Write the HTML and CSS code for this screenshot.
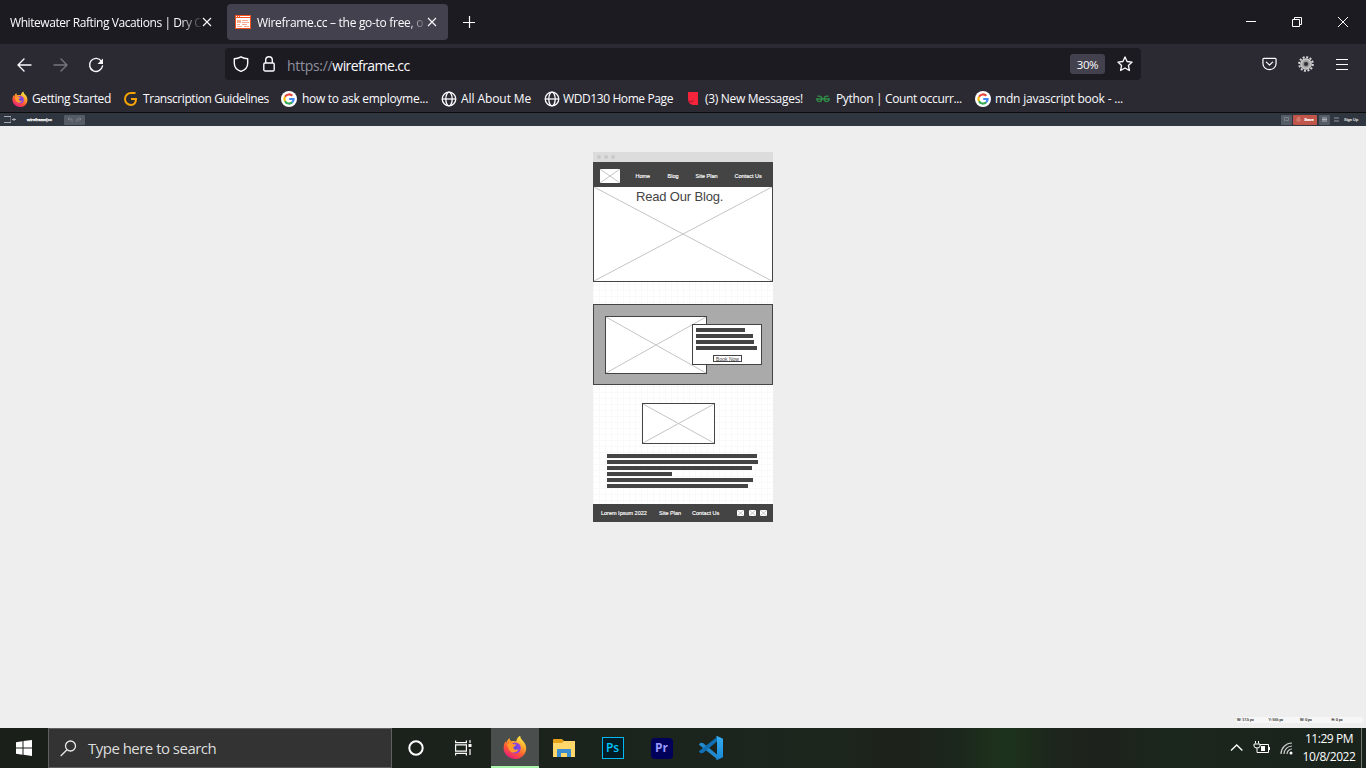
FILE: index.html
```
<!DOCTYPE html>
<html lang="en">
<head>
<meta charset="utf-8">
<title>Wireframe.cc</title>
<link rel="stylesheet" href="styles.css">
</head>
<body>
<svg class="defs" width="0" height="0" aria-hidden="true">
  <defs>
    <linearGradient id="flame" x1=".8" y1="0" x2=".25" y2="1"><stop offset="0" stop-color="#fff44f"/><stop offset=".35" stop-color="#ffa72b"/><stop offset=".65" stop-color="#ff5634"/><stop offset="1" stop-color="#e31587"/></linearGradient>
    <radialGradient id="globeFill"><stop offset="0" stop-color="#5b4be0"/><stop offset="1" stop-color="#9a3fe0"/></radialGradient>
    <radialGradient id="gearFill"><stop offset=".2" stop-color="#777"/><stop offset="1" stop-color="#d8d8d8"/></radialGradient>
    <linearGradient id="code" x1="0" y1="0" x2="0" y2="1"><stop offset="0" stop-color="#35aef2"/><stop offset="1" stop-color="#1a86d3"/></linearGradient>
  </defs>
  <symbol id="firefox" viewBox="0 0 24 24">
    <path fill="url(#flame)" d="M17.2 .8c.1 2.1 1 3.3 2.6 4.9 2.600 2.500 3.900 6 3.200 9.500C22 20.300 17.600 24 12.300 24 6 24 .6 19.200.6 12.800c0-2.600.8-5 2.100-6.800.1 1 .3 1.600.7 2.100C3.700 6 4.900 4.200 6.500 3c0 1.600.9 2.900 1.900 3.300 2-.4 3.700-.2 4.900.3.1-2.400 1.500-4.600 3.900-5.800z"/>
    <circle cx="12.200" cy="13" r="5.600" fill="url(#globeFill)"/>
    <path fill="#ff9a2b" d="M4 9.500c2.500-2 4.800-1.600 6.600-.2l2.600.1c-.2 1.600-2.700 1.800-2.900 3.100.1 2.200 2.700 3.100 5.300 1.500-1.300 3.200-4.800 4.700-7.800 2.700C5.600 15.300 5 12 4 9.500z"/>
  </symbol>
  <symbol id="google" viewBox="0 0 16 16">
    <circle cx="8" cy="8" r="8" fill="#fff"/>
    <g fill="none" stroke-width="2.200"><path stroke="#ea4335" d="M11.300 4.800A4.600 4.600 0 0 0 4 5.800"/><path stroke="#fbbc05" d="M4 5.700a4.600 4.600 0 0 0 0 4.600"/><path stroke="#34a853" d="M4 10.200a4.600 4.600 0 0 0 7.100 1.200"/><path stroke="#4285f4" d="M8.200 8h4.400a4.600 4.600 0 0 1-1.500 3.400"/></g>
  </symbol>
  <symbol id="globe" viewBox="0 0 16 16">
    <g fill="none" stroke="#fbfbfe" stroke-width="1.300"><circle cx="8" cy="8" r="6.800"/><ellipse cx="8" cy="8" rx="3.200" ry="6.800"/><path d="M1.500 8h13"/></g>
  </symbol>
  <symbol id="x" viewBox="0 0 10 10"><path d="M1 1l8 8M9 1l-8 8" stroke="#fbfbfe" stroke-width="1.100" fill="none"/></symbol>
  <symbol id="cross" viewBox="0 0 100 100" preserveAspectRatio="none"><path d="M0 0L100 100M100 0L0 100" stroke="#c4c4c4" fill="none" vector-effect="non-scaling-stroke"/></symbol>
</svg>

<header class="browser">
  <div class="tabs">
    <div class="tab"><span class="tab-title first">Whitewater Rafting Vacations | Dry C</span><svg class="close"><use href="#x"/></svg></div>
    <div class="tab active">
      <svg class="favicon" viewBox="0 0 16 14"><path fill="#fff" d="M0 0h16v14H0z"/><path fill="#f4511e" d="M0 0h16v3H0zM0 3h1v11H0zM15 3h1v11h-1zM1 13h14v1H1z"/><path fill="#fff" d="M1 1h1v1H1zM3 1h1v1H3zM5 1h10v1H5z"/><path fill="#ffab91" d="M2 5h4v3H2zM7 5h6v1H7zM7 7h7v1H7zM2 9h3v1H2zM7 9h5v1H7zM2 11h5v1H2zM9 11h5v1H9z"/></svg>
      <span class="tab-title second">Wireframe.cc – the go-to free, o</span><svg class="close"><use href="#x"/></svg>
    </div>
    <svg class="new-tab" viewBox="0 0 12 12"><path d="M6.500 0v12M0 6.500h12" stroke="#fbfbfe" stroke-width="1.200"/></svg>
    <svg class="window-controls" viewBox="0 0 104 12" fill="none" stroke="#fff"><path d="M0 5.500h10M46.500 3.500h7v7h-7zM48.500 3.500v-2h7v7h-2M92 1l10 10M102 1L92 11"/></svg>
  </div>
  <div class="navigation">
    <svg class="nav-icons" viewBox="0 0 90 16" fill="none" stroke="#fbfbfe" stroke-width="1.400" stroke-linecap="round" stroke-linejoin="round"><path d="M15 8H2M8 2L2 8l6 6"/><path stroke="#77767e" d="M38 8h13M45 2l6 6-6 6"/><path d="M85.500 4.300A6.500 6.500 0 1 0 86.500 9"/><path fill="#fbfbfe" stroke="none" d="M87 1.500v5.500h-5.500z"/></svg>
    <div class="url">
      <svg class="shield" viewBox="0 0 16 16" fill="none" stroke="#fbfbfe" stroke-width="1.400" stroke-linejoin="round"><path d="M8 .8c2.500 1.500 4.200 1.900 6.700 1.900v4.500c0 4-2.400 6.700-6.700 8.200C3.700 13.900 1.300 11.200 1.300 7.200V2.700C3.800 2.700 5.500 2.300 8 .8z"/></svg>
      <svg class="lock" viewBox="0 0 12 16" fill="none" stroke="#fbfbfe" stroke-width="1.400"><rect x=".8" y="7" width="10.400" height="8" rx="1.300"/><path d="M2.700 7V4a3.300 3.300 0 0 1 6.600 0v3"/></svg>
      <span class="address"><span class="scheme">https://</span>wireframe.cc</span>
      <span class="zoom">30%</span>
      <svg class="star" viewBox="0 0 16 16"><path fill="none" stroke="#fbfbfe" stroke-width="1.300" stroke-linejoin="round" d="M8 .9l2.100 4.600 5 .6-3.700 3.400 1 5L8 12l-4.400 2.500 1-5L.9 6.100l5-.6z"/></svg>
    </div>
    <svg class="pocket" viewBox="0 0 16 14" fill="none" stroke="#fbfbfe" stroke-width="1.300" stroke-linejoin="round" stroke-linecap="round"><path d="M2 1h12q1 0 1 1v4.500a7 6.500 0 0 1-14 0V2q0-1 1-1z"/><path d="M4.700 5L8 8.200 11.300 5"/></svg>
    <svg class="gear" viewBox="0 0 16 16"><circle cx="8" cy="8" r="6.800" fill="none" stroke="#d8d8d8" stroke-width="2" stroke-dasharray="2 1.560"/><circle cx="8" cy="8" r="5.800" fill="url(#gearFill)"/><circle cx="8" cy="8" r="2" fill="#303036"/></svg>
    <svg class="menu" viewBox="0 0 12 11"><path d="M0 .5h12M0 5.500h12M0 10.500h12" stroke="#fbfbfe" stroke-width="1"/></svg>
  </div>
  <nav class="bookmarks">
    <a class="bookmark started"><svg><use href="#firefox"/></svg><span>Getting Started</span></a>
    <a class="bookmark guidelines"><svg viewBox="0 0 16 16" fill="none" stroke="#f5a300" stroke-width="2"><path d="M12.500 2H8A5.800 5.800 0 0 0 8 14q4.800 0 5-6H8"/></svg><span>Transcription Guidelines</span></a>
    <a class="bookmark ask"><svg><use href="#google"/></svg><span>how to ask employme...</span></a>
    <a class="bookmark about"><svg><use href="#globe"/></svg><span>All About Me</span></a>
    <a class="bookmark wdd"><svg><use href="#globe"/></svg><span>WDD130 Home Page</span></a>
    <a class="bookmark messages"><svg viewBox="0 0 16 16"><path fill="#f3243b" d="M3 1h10v13H8Q3 13 3 8z"/><path fill="none" stroke="#9b1028" d="M4 10q3 2 4.500-.7"/></svg><span>(3) New Messages!</span></a>
    <a class="bookmark python"><svg viewBox="0 0 16 16" fill="none" stroke="#2f8d46" stroke-width="1.400"><path d="M2.500 5.200Q6.900 4.500 6.900 8 6.500 10.800 4 10.600 1.700 10 1.700 8H14.300Q14.300 10 12 10.600 9.500 10.800 9.100 8 9.100 4.500 13.500 5.200"/></svg><span>Python | Count occurr...</span></a>
    <a class="bookmark mdn"><svg><use href="#google"/></svg><span>mdn javascript book - ...</span></a>
  </nav>
</header>

<div class="app-bar">
  <svg class="app-menu" viewBox="0 0 12 7" fill="none" stroke="#a5a9af"><path d="M0 .5h7M0 6.500h7" /><path stroke="#5d646e" d="M6.500 1v5"/><path d="M8 3.500h4M10 2v3"/></svg>
  <b class="brand">wireframe|cc</b>
  <svg class="history" viewBox="0 0 21 10"><rect width="21" height="10" rx="1" fill="#555c66"/><path d="M4 4h4v3M5.500 2.500L4 4l1.500 1.500M17 4h-4v3M15.500 2.500L17 4l-1.500 1.500" fill="none" stroke="#858b94" stroke-width=".8"/></svg>
  <span class="app-button plain"><svg viewBox="0 0 5 5"><path d="M.5 4.500v-4h4v3h-3" fill="none" stroke="#8a9098" stroke-width=".7"/></svg></span>
  <span class="app-button save"><svg viewBox="0 0 5 5"><path d="M1 2h3v2H1zM1 1l3-.5" fill="none" stroke="#df9e95" stroke-width=".7"/></svg><b>Save</b></span>
  <span class="app-button list"><svg viewBox="0 0 5 5"><path d="M0 1h5M0 2.500h5M0 4h5" stroke="#b6bac0" stroke-width=".9"/></svg></span>
  <svg class="app-lines" viewBox="0 0 5 5"><path d="M0 1h5M0 4h5" stroke="#9ca1a8" stroke-width=".9"/></svg>
  <span class="sign-up">Sign Up</span>
</div>

<main class="workspace">
  <div class="mock">
    <div class="mock-chrome"><i></i><i></i><i></i></div>
    <div class="mock-header">
      <svg class="mock-logo"><use href="#cross"/></svg>
      <span class="home">Home</span><span class="blog">Blog</span><span class="plan">Site Plan</span><span class="contact">Contact Us</span>
    </div>
    <div class="hero"><svg><use href="#cross"/></svg><h1>Read Our Blog.</h1></div>
    <div class="feature">
      <div class="picture"><svg><use href="#cross"/></svg></div>
      <div class="card">
        <i style="width:49px"></i><i style="width:57px"></i><i style="width:58px"></i><i style="width:61px"></i>
        <span class="book">Book Now</span>
      </div>
    </div>
    <div class="thumbnail"><svg><use href="#cross"/></svg></div>
    <div class="copy"><i style="width:150px"></i><i style="width:151px"></i><i style="width:145px"></i><i style="width:65px"></i><i style="width:146px"></i><i style="width:141px"></i></div>
    <div class="mock-footer">
      <span class="legal">Lorem Ipsum 2022</span><span class="foot-plan">Site Plan</span><span class="foot-contact">Contact Us</span>
      <svg><use href="#cross"/></svg><svg><use href="#cross"/></svg><svg><use href="#cross"/></svg>
    </div>
  </div>
  <div class="status"><span>W: 17.5 px</span><span>Y: 555 px</span><span>W: 0 px</span><span>H: 0 px</span></div>
</main>

<footer class="taskbar">
  <svg class="windows" viewBox="0 0 16 16"><path fill="#fff" d="M0 2.200L6.500 1.300v6.200H0zM7.500 1.100L16 0v7.500H7.500zM0 8.500h6.500v6.200L0 13.800zM7.500 8.500H16V16l-8.500-1.200z"/></svg>
  <div class="search"><svg viewBox="0 0 17 17" fill="none" stroke="#e8e8e8" stroke-width="1.300"><circle cx="10.500" cy="6" r="5"/><path d="M7 9.700L.7 16"/></svg><span>Type here to search</span></div>
  <div class="task cortana"><svg width="16" height="16" viewBox="0 0 16 16"><circle cx="8" cy="8" r="6.700" fill="none" stroke="#fff" stroke-width="2"/></svg></div>
  <div class="task view"><svg width="17" height="16" viewBox="0 0 17 16" fill="none" stroke="#fff" stroke-width="1.200"><path d="M.6 .5v2.200h10.800V.5M.6 4.900h10.800v6.200H.6zM.6 15.500v-2.200h10.800v2.200M15 0v3M15 9v6"/><path d="M13.500 5.500h3" stroke-width="3"/></svg></div>
  <div class="task current"><svg width="24" height="24"><use href="#firefox"/></svg></div>
  <div class="task"><svg class="folder" width="22" height="19" viewBox="0 0 22 19"><path fill="#e3a21a" d="M0 1q0-1 1-1h8l2 2h11v4H0z"/><path fill="#ffd76a" d="M0 4h9l2-2h11v16H0z"/><path fill="#3a8dd0" d="M4 18v-7q0-1 1-1h12q1 0 1 1v7h-4v-4H8v4z"/></svg></div>
  <div class="task"><span class="photoshop">Ps</span></div>
  <div class="task"><span class="premiere">Pr</span></div>
  <div class="task"><svg width="24" height="24" viewBox="0 0 24 24"><path fill="#2489ca" d="M0 8.200L1.600 6.700 4 7l14 11.500V23L.2 9z"/><path fill="#1070b3" d="M0 15.800l1.600 1.500L4 17 18 5.500V1L.2 15z"/><path fill="url(#code)" d="M18 0l6 2.700v18.600L18 24l-1.300-.8c.8 0 1.300-.4 1.300-1.200V2c0-.8-.5-1.200-1.300-1.200z"/></svg></div>
  <svg class="tray" viewBox="0 0 64 16" fill="none" stroke="#fff"><path stroke-width="1.300" d="M1 10.500L6.700 5l5.700 5.500"/><path d="M30 4.500h8.500v8H27M39.500 7v3M25.500 1v2.500M28.500 1v2.500M24 4h6v2q0 2-3 2t-3-2zM27 8v4.500"/><path fill="#fff" stroke="none" d="M31 6h4v5h-4z"/><g stroke="#ccc" stroke-width="1.200"><path d="M51 14A11 11 0 0 1 62 3M54 14A8 8 0 0 1 62 6M57 14A5 5 0 0 1 62 9"/></g><circle cx="61" cy="13" r="1.500" fill="#fff" stroke="none"/></svg>
  <div class="clock"><span class="time">11:29 PM</span><span class="date">10/8/2022</span></div>
  <i class="desktop-edge"></i>
</footer>
</body>
</html>
```
FILE: styles.css
```
* { box-sizing: border-box; }
body {
  margin: 0; width: 1366px; height: 768px; overflow: hidden;
  display: flex; flex-direction: column;
  font-family: "Open Sans", "Noto Sans", sans-serif; font-size: 12px; color: #fbfbfe; background: #eee;
}
svg { display: block; flex: none; }
span, b { white-space: nowrap; }
.defs { position: absolute; }

/* Browser window */
.browser { height: 113px; background: #2b2a33; border-bottom: 1px solid #0c0c0d; flex: none; }
.tabs { height: 44px; background: #1c1b22; display: flex; align-items: center; }
.tab { width: 227px; height: 36px; padding-left: 10px; display: flex; align-items: center; }
.tab-title { width: 191px; letter-spacing: -.43px; -webkit-mask-image: linear-gradient(90deg, #000 89%, transparent 101%); mask-image: linear-gradient(90deg, #000 89%, transparent 101%); }
.tab .close { width: 10px; height: 10px; margin-left: 1px; }
.tab.active { width: 221px; background: #42414d; border-radius: 4px; padding-left: 8px; }
.favicon { width: 16px; height: 14px; }
.tab-title.second { margin-left: 6px; width: 169px; letter-spacing: -.3px; }
.tab.active .close { margin-left: 1px; }
.new-tab { width: 12px; height: 12px; margin-left: 15px; }
.window-controls { width: 104px; height: 12px; margin-left: auto; margin-right: 16px; }
.navigation { height: 42px; display: flex; align-items: center; padding-left: 16px; }
.nav-icons { width: 90px; height: 16px; }
.url { width: 916px; height: 32px; margin: -2px 0 0 119px; background: #1c1b22; border-radius: 4px; display: flex; align-items: center; padding: 0 8px; }
.shield { width: 16px; height: 16px; }
.lock { width: 12px; height: 16px; margin-left: 14px; }
.address { margin: 2px 0 0 12px; font-size: 14px; letter-spacing: -.57px; }
.scheme { color: #8f8f9d; letter-spacing: -.3px; }
.zoom { width: 35px; height: 20px; line-height: 21px; border-radius: 3px; margin-left: auto; background: #42414d; text-align: center; font-size: 11.500px; letter-spacing: -.4px; }
.star { width: 16px; height: 16px; margin-left: 12px; }
.pocket { width: 15px; height: 14px; margin: -2px 0 0 121px; }
.gear { width: 16px; height: 16px; margin: -2px 0 0 21px; }
.menu { width: 12px; height: 11px; margin: -2px 0 0 22px; }
.bookmarks { display: flex; height: 25px; padding-left: 12px; align-items: center; }
.bookmark { display: flex; align-items: center; flex: none; letter-spacing: -.4px; }
.bookmark svg { width: 16px; height: 16px; margin-right: 4px; }
.started { width: 111px; }
.guidelines { width: 158px; letter-spacing: -.44px; }
.ask { width: 160px; letter-spacing: -.28px; }
.ask svg, .python svg { margin-right: 5px; }
.about { width: 103px; letter-spacing: -.08px; }
.wdd { width: 141px; }
.wdd svg { margin-right: 3px; }
.messages { width: 130px; letter-spacing: -.3px; }
.python { width: 160px; letter-spacing: -.36px; }
.mdn { letter-spacing: -.2px; }

/* Editor toolbar */
.app-bar { height: 13px; flex: none; background: #2f3640; display: flex; align-items: center; padding-left: 4px; font: 4px "Liberation Sans", Arial, sans-serif; }
.app-menu { width: 12px; height: 7px; }
.brand { width: 26px; margin-left: 11px; letter-spacing: .05px; color: #fff; -webkit-text-stroke: .25px #fff; }
.history { width: 21px; height: 10px; margin-left: 11px; }
.app-button { height: 10px; width: 11px; background: #555c66; border-radius: 1px; display: flex; align-items: center; justify-content: center; }
.app-button svg { width: 5px; height: 5px; }
.app-button b { -webkit-text-stroke: .2px #fff; }
.plain { margin-left: auto; }
.save { width: 24px; background: #c0554a; margin: 0 2px 0 1px; gap: 3px; }
.app-lines { width: 5px; height: 5px; margin-left: 4px; }
.sign-up { margin: 0 8px 0 5px; width: 14px; color: #ddd; -webkit-text-stroke: .2px #ddd; }

/* Canvas */
.workspace { flex: 1; padding-top: 26px; background: #eee; display: flex; flex-direction: column; align-items: center; min-height: 0; }
.mock {
  width: 180px; height: 370px; flex: none; color: #444; background-color: #fff;
  background-image: linear-gradient(#f9f9f9 1px, transparent 1px), linear-gradient(90deg, #f9f9f9 1px, transparent 1px); background-size: 6px 6px;
  display: flex; flex-direction: column; font-family: "Liberation Sans", Arial, sans-serif;
}
.mock-chrome { height: 10px; background: #dcdcdc; display: flex; align-items: center; gap: 3px; padding-left: 3.500px; }
.mock-chrome i { width: 4px; height: 4px; border-radius: 50%; background: #c9c9c9; }
.mock-header { height: 24px; background: #444; display: flex; align-items: center; padding: 4px 0 0 7px; color: #fff; font-size: 5.500px; }
.mock-header span, .mock-footer span { flex: none; -webkit-text-stroke: .15px #fff; }
.mock-logo { width: 20px; height: 14px; background: #fff; }
.home { width: 32px; margin-left: 15.500px; }
.blog { width: 28px; }
.plan { width: 39px; }
.hero { height: 96px; border: 1px solid #444; background: #fff; position: relative; }
.hero svg, .picture svg, .thumbnail svg { width: 100%; height: 100%; }
.hero h1 { position: absolute; left: 42px; top: 2px; margin: 0; font-size: 13px; line-height: 15px; font-weight: 400; letter-spacing: -.17px; white-space: nowrap; }
.feature { height: 81px; margin-top: 22px; padding: 11px; background: #aaa; border: 1px solid #444; display: flex; }
.picture { width: 102px; height: 58px; border: 1px solid #444; background: #fff; flex: none; }
.card { width: 70px; height: 41px; flex: none; margin: 8px 0 0 -15px; border: 1px solid #444; background: #fff; z-index: 1; padding: 3px; display: flex; flex-direction: column; gap: 2px; }
.card i, .copy i { height: 4px; flex: none; background: #444; }
.book { width: 29px; height: 7px; margin: 3px 0 0 17px; border: 1px solid #444; font-size: 5px; line-height: 6px; text-align: center; text-decoration: underline; text-decoration-thickness: .5px; text-underline-offset: 0; flex: none; }
.thumbnail { width: 73px; height: 41px; margin: 18px 0 0 49px; border: 1px solid #444; background: #fff; }
.copy { margin: 10px 0 0 14px; display: flex; flex-direction: column; gap: 2px; }
.mock-footer { height: 18px; margin-top: auto; background: #444; color: #fff; display: flex; align-items: center; padding-left: 8px; font-size: 5.500px; }
.legal { width: 58px; }
.foot-plan { width: 33px; }
.foot-contact { width: 45px; }
.mock-footer svg { width: 7px; height: 6px; background: #fff; margin-right: 4.500px; }
.status { width: 127px; height: 6px; flex: none; margin: auto 3px 5px auto; background: #f6f6f6; display: flex; color: #333; font: 3.500px/6px "Liberation Sans", Arial, sans-serif; }
.status span { width: 31.500px; padding-left: 1px; -webkit-text-stroke: .15px #333; }

/* Desktop taskbar */
.taskbar { height: 40px; flex: none; background: linear-gradient(90deg, #1a2019, #1c241e 54%, #1c261c 60%, #1d221b 66%, #1b261c 70%, #1d321c 73%, #1d321c 74%, #1d261c 77%, #1e221c 80%, #1b261c 85%, #19231c); display: flex; align-items: center; color: #fff; }
.windows { width: 16px; height: 16px; margin: 0 16px; }
.search { width: 344px; height: 40px; background: #333; border: 1px solid #606060; display: flex; align-items: center; padding-left: 11px; font-size: 15px; letter-spacing: -.52px; color: #ddd; }
.search svg { width: 17px; height: 17px; margin-right: 11px; }
.task { width: 49px; height: 40px; display: flex; align-items: center; justify-content: center; }
.cortana { width: 48px; }
.view { width: 47px; margin-right: 4px; }
.task.current { width: 48px; background: #4a4e4c; border-bottom: 2px solid #a9f5a9; }
.photoshop { width: 22px; height: 22px; border: 1.500px solid #00b9f2; background: #001d26; color: #00c8ff; text-align: center; line-height: 19px; font-size: 12px; font-weight: 600; }
.premiere { width: 22px; height: 21px; border-radius: 4px; background: #00005b; color: #9999ff; text-align: center; line-height: 20px; font-size: 12px; font-weight: 700; }
.tray { width: 64px; height: 16px; margin-left: auto; }
.clock { width: 56px; margin-left: 7px; display: flex; flex-direction: column; align-items: center; line-height: 18px; letter-spacing: -.45px; }
.desktop-edge { width: 1px; height: 40px; margin: 0 4px 0 4px; background: #737873; }
```
